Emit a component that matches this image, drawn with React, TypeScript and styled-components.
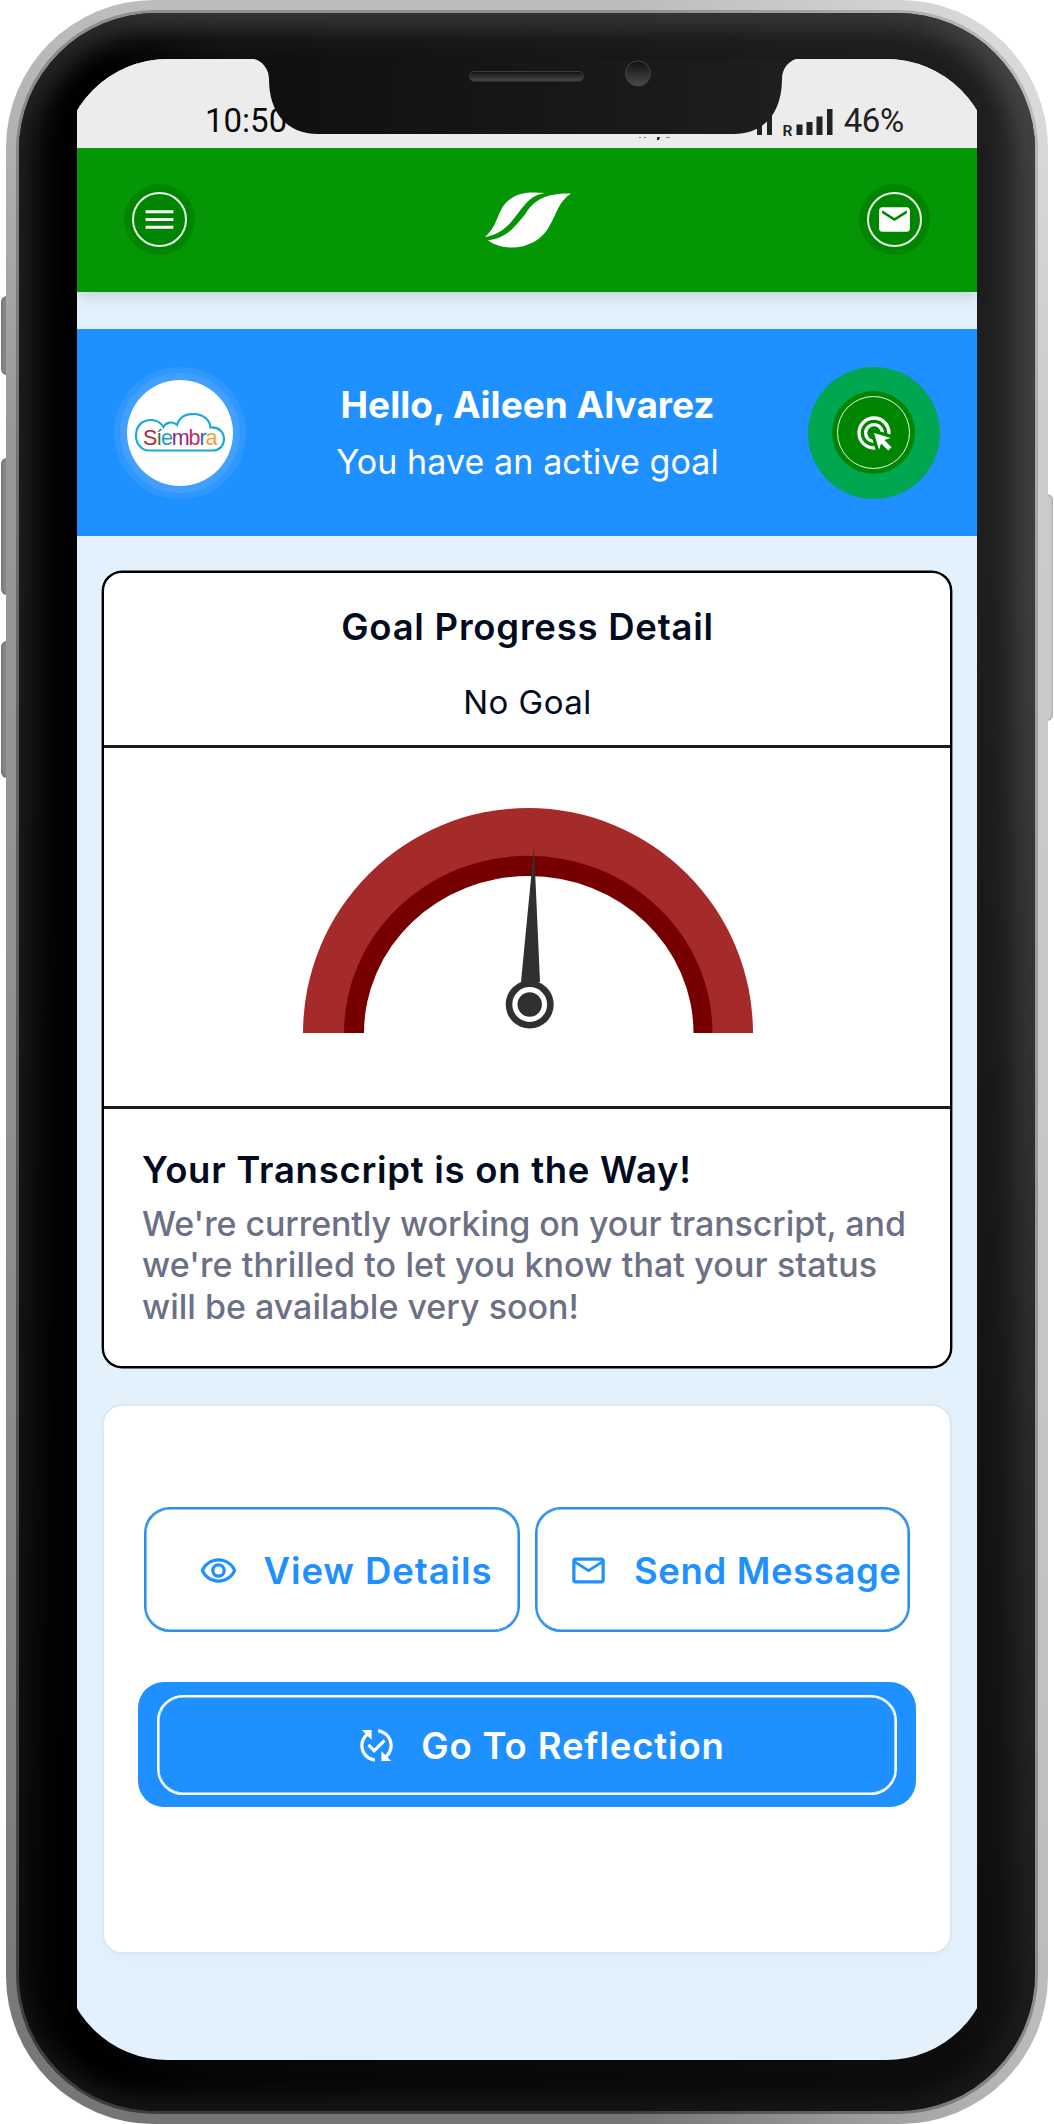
import React from "react";
import styled, { createGlobalStyle } from "styled-components";
import {
  MdMenu,
  MdEmail,
  MdAdsClick,
  MdOutlineRemoveRedEye,
  MdMailOutline,
  MdPublishedWithChanges,
} from "react-icons/md";

const blue = "#1e90ff";
const ink = "#020b20";

const GlobalStyle = createGlobalStyle`
  * { box-sizing: border-box; }
  body { margin: 0; background: #fff; font-family: Inter, "Open Sans", sans-serif; }
  h1, h2, p { margin: 0; font-weight: inherit; }
  button { font: inherit; background: none; border: 0; padding: 0; }
  svg { display: block; flex: none; }
`;

const Stage = styled.div`
  position: relative;
  width: 1054px;
  height: 2124px;
  padding: 0 6px;
  overflow: hidden;
`;

const SideKey = styled.i<{ $top: number; $height: number; $right?: boolean }>`
  position: absolute;
  top: ${(p) => p.$top}px;
  height: ${(p) => p.$height}px;
  width: 12px;
  ${(p) => (p.$right ? "right: 1px" : "left: 1px")};
  border-radius: 6px;
  background: ${(p) => (p.$right ? "#cbcbcb" : "#858585")};
  box-shadow: inset 0 0 3px #0005;
`;

const Frame = styled.div`
  position: relative;
  height: 2124px;
  padding: 10px;
  border-radius: 148px;
  background: linear-gradient(90deg, #fff0 60%, #ffffff80 99%),
    linear-gradient(180deg, #bdbdbd 0%, #999 20%, #8a8a8a 70%, #757575 100%);
`;

const Rim = styled.div`
  height: 100%;
  padding: 3px;
  border-radius: 139px;
  background: linear-gradient(90deg, #fff0 60%, #ffffff66 99%),
    linear-gradient(180deg, #8f8f8f 0%, #666 30%, #3c3c3c 100%);
`;

const Bezel = styled.div`
  position: relative;
  height: 100%;
  padding: 46px 0 0 58px;
  border-radius: 137px;
  overflow: hidden;
  background: linear-gradient(90deg, #000 6%, #101010 20%, #202020 100%);
  box-shadow: inset 24px 0 34px -10px #222, inset -24px 0 30px -6px #4a4a4a,
    inset 0 22px 30px -8px #3a3a3a;

  /* the reflection on the glass fades towards the bottom */
  &::before {
    content: "";
    position: absolute;
    inset: 0;
    border-radius: inherit;
    background: linear-gradient(180deg, #0000 25%, #0009 100%);
    box-shadow: inset 0 -24px 26px -14px #171717;
  }
`;

const Screen = styled.main`
  position: relative;
  display: flex;
  flex-direction: column;
  width: 900px;
  height: 2001px;
  background: #e3f1fd;
  clip-path: inset(0 -15px round 106px);
`;

const Notch = styled.svg`
  position: absolute;
  top: 0;
  left: 173px;
  z-index: 2;
`;

const StatusBar = styled.div`
  position: relative;
  z-index: 1;
  display: flex;
  justify-content: space-between;
  align-items: flex-end;
  height: 89px;
  padding: 0 73px 8px 128px;
  background: #ececec;
  color: #222;
  font: 33px/38px Roboto, sans-serif;
`;

const Clock = styled.span`
  color: #0a0a0a;
`;

const StatusRight = styled.div`
  display: flex;
  align-items: flex-end;
  gap: 11px;
`;

const Percent = styled.span`
  letter-spacing: -0.3px;
`;

const Header = styled.header`
  position: relative;
  display: flex;
  align-items: center;
  justify-content: space-between;
  height: 144px;
  padding: 0 47px 1px;
  background: #059605;
  color: #fff;
  box-shadow: 0 3px 16px #00000026;
`;

const RoundButton = styled.button<{ $size: number; $inset: number; $line: number }>`
  display: grid;
  place-items: center;
  width: ${(p) => p.$size}px;
  height: ${(p) => p.$size}px;
  padding: ${(p) => p.$inset}px;
  border-radius: 50%;
  background: #008500;
  color: #fff;

  > span {
    display: grid;
    place-items: center;
    width: 100%;
    height: 100%;
    border: ${(p) => p.$line}px solid #e9f6e9;
    border-radius: 50%;
  }
`;

const Banner = styled.section`
  display: flex;
  align-items: center;
  justify-content: space-between;
  height: 207px;
  margin-top: 37px;
  padding: 0 37px;
  background: ${blue};
  color: #fff;
`;

const Avatar = styled.div`
  display: grid;
  place-items: center;
  width: 132px;
  height: 132px;
  border: 6.5px solid #3097ff;
  border-radius: 50%;
  background: #419fff;
`;

const AvatarDisc = styled.div`
  display: grid;
  place-items: center;
  width: 106px;
  height: 106px;
  border-radius: 50%;
  background: #fff;
`;

const Greeting = styled.div`
  display: flex;
  flex-direction: column;
  align-items: center;
  gap: 11px;
  padding: 1px 0 0 1px;
`;

const Line = styled.p<{
  $size: number;
  $weight: number;
  $track?: number;
  $height?: number;
  $color?: string;
}>`
  font-size: ${(p) => p.$size}px;
  font-weight: ${(p) => p.$weight};
  letter-spacing: ${(p) => p.$track ?? 0}px;
  line-height: ${(p) => p.$height ?? 46}px;
  color: ${(p) => p.$color ?? "inherit"};
  white-space: nowrap;
`;

const GoalHalo = styled.div`
  display: grid;
  place-items: center;
  width: 132px;
  height: 132px;
  border-radius: 50%;
  background: #00a650;
`;

const GoalCard = styled.section`
  display: flex;
  flex-direction: column;
  width: 850px;
  height: 797px;
  margin: 35px 0 0 25px;
  border: 2px solid #000;
  border-radius: 20px;
  background: #fff;
  box-shadow: 0 0 0 0.4px #000;
  color: ${ink};
`;

const CardHead = styled.div`
  display: flex;
  flex-direction: column;
  align-items: center;
  gap: 29px;
  height: 175px;
  padding: 31px 0 0 1px;
  border-bottom: 3px solid #1c1c1c;
`;

const GaugeArea = styled.div`
  display: flex;
  justify-content: center;
  height: 361px;
  padding: 60px 0 0 2px;
  border-bottom: 3px solid #1c1c1c;
`;

const Transcript = styled.div`
  padding: 38px 0 0 38px;
`;

const Paragraph = styled.div`
  margin-top: 9.5px;
`;

const ActionCard = styled.section`
  display: flex;
  flex-direction: column;
  gap: 50px;
  width: 850px;
  height: 550px;
  margin: 36px 0 0 25px;
  padding: 101px 34px 0;
  border: 2px solid #dae8f3;
  border-radius: 20px;
  background: #fff;
  box-shadow: 0 8px 14px #00000004;
`;

const ActionRow = styled.div`
  display: flex;
  gap: 15px;
  padding: 0 6px;
`;

const OutlineButton = styled.button<{ $lead: number; $gap: number }>`
  display: flex;
  align-items: center;
  gap: ${(p) => p.$gap}px;
  width: 375.5px;
  height: 125px;
  padding: 2px 0 0 ${(p) => p.$lead}px;
  border: 2px solid #2b8fee;
  border-radius: 26px;
  box-shadow: inset 0 0 0 0.6px #2b8fee;
  color: ${blue};
`;

const PrimaryButton = styled.button`
  display: flex;
  height: 125px;
  padding: 12.5px 19px;
  border-radius: 26px;
  background: ${blue};
  color: #fff;
`;

const PrimaryInner = styled.span`
  display: flex;
  align-items: center;
  justify-content: center;
  gap: 25px;
  width: 100%;
  height: 100px;
  padding: 2px 0 0 28px;
  border: 2px solid #fff;
  border-radius: 26px;
  box-shadow: inset 0 0 0 0.6px #fff;
`;

function SignalIcons() {
  return (
    <svg width="204" height="34" viewBox="0 0 204 34" fill="#222">
      <rect x="128" y="10" width="5" height="19" />
      <rect x="138" y="4" width="5" height="25" />
      <text x="153.500" y="30" fontSize="15.500" fontWeight="600" fontFamily="Roboto, sans-serif">R</text>
      <rect x="167.500" y="18.5" width="6" height="10.5" />
      <rect x="177.500" y="16" width="6" height="13" />
      <rect x="187.500" y="10.5" width="6" height="18.5" />
      <rect x="198" y="3" width="5.5" height="26" />
      <path d="M28 31h3l-1 3h-2z" />
      <path d="M10 31h2v.6h-2zM15 31h2v.6h-2zM37 31h4v.6h-4z" />
    </svg>
  );
}

function LeafLogo() {
  return (
    <svg width="88" height="56" viewBox="-2 0 88 56" fill="#fff">
      <path d="M0 45C14 33 12 17 24 8C34 0 46 0 60 1C48 3 44 8 37 16C26 31 18 42 0 45Z" />
      <path d="M3 48.500C22 46 30 35 41 21C50 7 62 1 86 1.500C74 9 72 21 65 33C54 56 22 62 3 48.500Z" />
    </svg>
  );
}

function SiembraLogo() {
  return (
    <svg width="90" height="40" viewBox="0 0 90 40">
      <path
        d="M14 37.500C6 37.500 1 30 1 23C1 12 8 7 16 7C22 7 26 10 28.500 14C31 9 38 8 42 12C44 5 50 1 58 1C68 1 75 7 75.500 14.500C84 14 89 19 89 26C89 33 84 37.500 78 37.500Z"
        fill="none"
        stroke="#19a9df"
        strokeWidth="2.2"
      />
      <text x="8" y="31.5" fontSize="21.5" letterSpacing="-1.15" fontFamily="Liberation Sans, sans-serif">
        <tspan fill="#b5253c">S</tspan>
        <tspan fill="#3f7d35">í</tspan>
        <tspan fill="#1d9fc4">e</tspan>
        <tspan fill="#8a2a86">m</tspan>
        <tspan fill="#c72860">b</tspan>
        <tspan fill="#206fae">r</tspan>
        <tspan fill="#efa235">a</tspan>
      </text>
    </svg>
  );
}

function Gauge() {
  return (
    <svg width="450" height="226" viewBox="0 0 450 226">
      <path d="M0 225A225 225 0 0 1 450 225Z" fill="#a52a2a" />
      <path d="M41 225A184 177 0 0 1 409.500 225Z" fill="#760000" />
      <path d="M61 225A164.700 157 0 0 1 390.500 225Z" fill="#fff" />
      <path d="M231 39L218 174H237Z" fill="#303030" />
      <circle cx="226.700" cy="196.500" r="24" fill="#303030" />
      <circle cx="226.700" cy="196.500" r="14.800" fill="none" stroke="#fff" strokeWidth="5.200" />
    </svg>
  );
}

function NotchShape() {
  return (
    <Notch width="552" height="76" viewBox="0 0 552 76">
      <defs>
        <linearGradient id="notch" x1="0" y1="0" x2="1" y2="0">
          <stop offset="0" stopColor="#0f0f0f" />
          <stop offset="1" stopColor="#1e1e1e" />
        </linearGradient>
        <linearGradient id="lens" x1="0" y1="0" x2="0" y2="1">
          <stop offset="0" stopColor="#111" />
          <stop offset="1" stopColor="#4a4a4a" />
        </linearGradient>
      </defs>
      <path
        d="M0 0H4C13 2 19 11 19 20C19 54 37 75 68 75H484C514 75 532 54 532 20C532 11 537 3 546 0Z"
        fill="url(#notch)"
      />
      <rect x="219.500" y="12.500" width="114" height="9.500" rx="4.500" fill="url(#lens)" stroke="#3c3c3c" />
      <circle cx="388" cy="14.500" r="12.500" fill="url(#lens)" stroke="#444" />
    </Notch>
  );
}

const paragraph = [
  { text: "We're currently working on your transcript, and", track: -0.1 },
  { text: "we're thrilled to let you know that your status", track: 0.11 },
  { text: "will be available very soon!", track: 0 },
];

export default function App() {
  return (
    <Stage>
      <GlobalStyle />
      <SideKey $top={296} $height={79} />
      <SideKey $top={458} $height={137} />
      <SideKey $top={641} $height={137} />
      <SideKey $top={494} $height={227} $right />
      <Frame>
        <Rim>
          <Bezel>
            <Screen>
              <StatusBar>
                <Clock>10:50</Clock>
                <StatusRight>
                  <SignalIcons />
                  <Percent>46%</Percent>
                </StatusRight>
              </StatusBar>
              <NotchShape />
              <Header>
                <RoundButton $size={71} $inset={8} $line={2} aria-label="Menu">
                  <span><MdMenu size={37} /></span>
                </RoundButton>
                <LeafLogo />
                <RoundButton $size={71} $inset={8} $line={2} aria-label="Messages">
                  <span><MdEmail size={37} /></span>
                </RoundButton>
              </Header>
              <Banner>
                <Avatar>
                  <AvatarDisc><SiembraLogo /></AvatarDisc>
                </Avatar>
                <Greeting>
                  <Line as="h1" $size={37} $weight={700}>Hello, Aileen Alvarez</Line>
                  <Line $size={34} $weight={400} $track={0.1}>You have an active goal</Line>
                </Greeting>
                <GoalHalo>
                  <RoundButton $size={83} $inset={5} $line={1.5} aria-label="Goal">
                    <span><MdAdsClick size={40} /></span>
                  </RoundButton>
                </GoalHalo>
              </Banner>
              <GoalCard>
                <CardHead>
                  <Line as="h2" $size={36.5} $weight={600} $track={0.75}>Goal Progress Detail</Line>
                  <Line $size={33} $weight={400} $track={0.5}>No Goal</Line>
                </CardHead>
                <GaugeArea>
                  <Gauge />
                </GaugeArea>
                <Transcript>
                  <Line as="h2" $size={36.5} $weight={600} $track={0.72}>Your Transcript is on the Way!</Line>
                  <Paragraph>
                    {paragraph.map((line) => (
                      <Line key={line.text} $size={34} $weight={500} $height={41.5} $track={line.track} $color="#6c7085">
                        {line.text}
                      </Line>
                    ))}
                  </Paragraph>
                </Transcript>
              </GoalCard>
              <ActionCard>
                <ActionRow>
                  <OutlineButton $lead={52.5} $gap={26}>
                    <MdOutlineRemoveRedEye size={39} />
                    <Line as="span" $size={36.5} $weight={600} $track={0.9}>View Details</Line>
                  </OutlineButton>
                  <OutlineButton $lead={32.5} $gap={26}>
                    <MdMailOutline size={39} />
                    <Line as="span" $size={36.5} $weight={600} $track={0.6}>Send Message</Line>
                  </OutlineButton>
                </ActionRow>
                <PrimaryButton>
                  <PrimaryInner>
                    <MdPublishedWithChanges size={39} />
                    <Line as="span" $size={36.5} $weight={600} $track={0.85}>Go To Reflection</Line>
                  </PrimaryInner>
                </PrimaryButton>
              </ActionCard>
            </Screen>
          </Bezel>
        </Rim>
      </Frame>
    </Stage>
  );
}
